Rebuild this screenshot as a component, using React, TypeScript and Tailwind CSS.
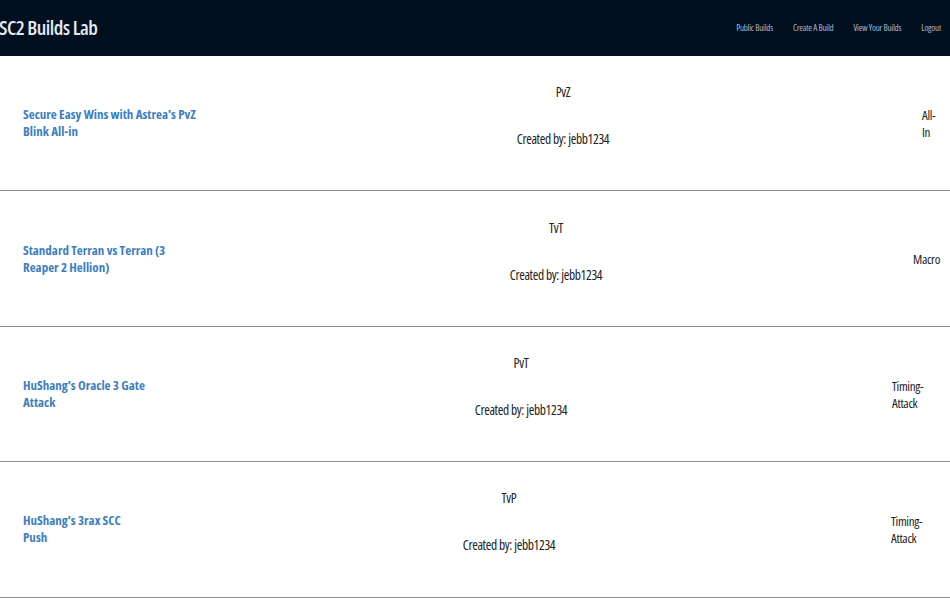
const builds = [
  {
    id: 1,
    title: ["Secure Easy Wins with Astrea's PvZ", "Blink All-in"],
    matchup: "PvZ",
    author: "jebb1234",
    type: ["All-", "In"],
    left: "w-[204px]",
    right: "w-[28px]",
  },
  {
    id: 2,
    title: ["Standard Terran vs Terran (3", "Reaper 2 Hellion)"],
    matchup: "TvT",
    author: "jebb1234",
    type: ["Macro"],
    left: "w-[199px]",
    right: "w-[37px]",
  },
  {
    id: 3,
    title: ["HuShang's Oracle 3 Gate", "Attack"],
    matchup: "PvT",
    author: "jebb1234",
    type: ["Timing-", "Attack"],
    left: "w-[150px]",
    right: "w-[58px]",
  },
  {
    id: 4,
    title: ["HuShang's 3rax SCC", "Push"],
    matchup: "TvP",
    author: "jebb1234",
    type: ["Timing-", "Attack"],
    left: "w-[127px]",
    right: "w-[59px]",
  },
];

const font = "font-['Open_Sans',_'Liberation_Sans',_sans-serif] font-stretch-condensed";

export default function App() {
  return (
    <div className={`min-h-screen bg-white ${font}`}>
      <nav className="h-[56px] bg-[#020f1e] flex items-center justify-between pr-[9px]">
        <span className="-ml-[1px] text-[20px] font-semibold text-[#e4eaf2] tracking-tight">SC2 Builds Lab</span>
        <div className="flex items-center gap-5 text-[9px] text-[#aab6cb] tracking-tight">
          <a href="#">Public Builds</a>
          <a href="#">Create A Build</a>
          <a href="#">View Your Builds</a>
          <a href="#">Logout</a>
        </div>
      </nav>

      {builds.map((b) => (
        <div key={b.id} className="h-[135.4px] flex items-center border-b border-[#8f8f8f]">
          <div className={`${b.left} shrink-0 pl-[23px] text-[13px] leading-[17px] font-bold text-[#3d7ebf]`}>
            {b.title.map((line) => (
              <div key={line} className="whitespace-nowrap">{line}</div>
            ))}
          </div>
          <div className="flex-1 flex flex-col items-center pb-[15px] text-[13.5px] leading-[20px] text-[#222] tracking-tight">
            <div>{b.matchup}</div>
            <div className="mt-[27px]">Created by: {b.author}</div>
          </div>
          <div className={`${b.right} shrink-0 pt-[2px] text-[13px] leading-[17px] text-[#222] tracking-tight`}>
            {b.type.map((line) => (
              <div key={line} className="whitespace-nowrap">{line}</div>
            ))}
          </div>
        </div>
      ))}
    </div>
  );
}
